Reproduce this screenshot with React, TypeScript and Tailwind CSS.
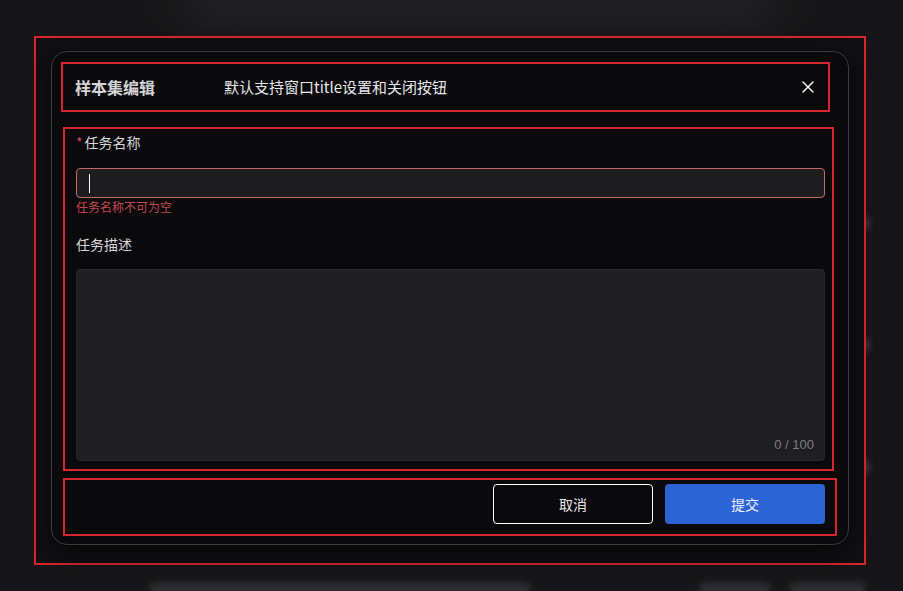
import { X } from 'lucide-react'

const font = { fontFamily: '"Noto Sans CJK SC", "Noto Sans", sans-serif' }

function Backdrop() {
  // blurred page content behind the dialog
  return (
    <div className="pointer-events-none absolute inset-0">
      <div className="absolute left-[180px] top-[-20px] h-[40px] w-[600px] rounded-full bg-[#26262b] blur-xl" />
      <div className="absolute left-[850px] top-[215px] h-[16px] w-[20px] rounded-full bg-[#3a3a3c] blur-[3px]" />
      <div className="absolute left-[850px] top-[337px] h-[16px] w-[20px] rounded-full bg-[#3a3a3c] blur-[3px]" />
      <div className="absolute left-[850px] top-[459px] h-[16px] w-[20px] rounded-full bg-[#3a3a3c] blur-[3px]" />
      <div className="absolute left-[150px] top-[582px] h-[14px] w-[380px] rounded bg-[#2e2e31] blur-[3px]" />
      <div className="absolute left-[700px] top-[582px] h-[14px] w-[70px] rounded bg-[#2e2e31] blur-[3px]" />
      <div className="absolute left-[790px] top-[582px] h-[14px] w-[75px] rounded bg-[#2e2e31] blur-[3px]" />
    </div>
  )
}

export default function App() {
  return (
    <div className="relative h-[591px] w-[903px] overflow-hidden bg-[#161618]" style={font}>
      <Backdrop />
      <div className="relative pl-[34px] pt-[36px]">
        <div className="w-[832px] border-2 border-[#d92530] bg-[#101013] pb-[18px] pl-[15px] pr-[15px] pt-[13px]">
          <div className="h-[494px] w-[798px] rounded-[16px] border border-[#3b3b3e] bg-[#0a0a0d] pt-[10px] shadow-[0_8px_24px_rgba(0,0,0,0.6)]">
            {/* header */}
            <div className="ml-[9px] flex h-[50px] w-[769px] items-center border-2 border-[#d92530] pl-[12px] pr-[8px]">
              <span className="w-[149px] text-[16px] font-bold text-[#d4d4d6]">样本集编辑</span>
              <span className="text-[15px] text-[#e8e8ea]">默认支持窗口title设置和关闭按钮</span>
              <button type="button" className="ml-auto flex h-6 w-6 items-center justify-center text-white">
                <X size={20} strokeWidth={1.6} />
              </button>
            </div>

            {/* body */}
            <div className="ml-[11px] mt-[15px] h-[344px] w-[771px] border-2 border-[#d92530] pl-[11px] pr-[7px] pt-[3px]">
              <label className="flex h-5 items-center text-[14px] text-[#d8d8da]">
                <span className="mr-[2px] text-[#c8504f]">*</span>任务名称
              </label>
              <div className="mt-[16px] flex h-[30px] w-[749px] items-center rounded-[4px] border border-[#c36a68] bg-[#1d1d20] px-3">
                <span className="h-[19px] w-px bg-white" />
              </div>
              <p className="mt-[1px] h-4 text-[12px] leading-4 text-[#c4474c]">任务名称不可为空</p>
              <label className="mt-[19px] flex h-5 items-center text-[14px] text-[#d8d8da]">任务描述</label>
              <div className="mt-[15px] flex h-[192px] w-[749px] items-end justify-end rounded-[4px] border border-[#29292c] bg-[#1f1f22] px-[10px] pb-[6px]">
                <span className="text-[13px] text-[#7d7d80]" style={{ fontFamily: '"Liberation Sans", Arial, sans-serif' }}>
                  0 / 100
                </span>
              </div>
            </div>

            {/* footer */}
            <div className="ml-[11px] mt-[7px] flex h-[58px] w-[774px] items-start justify-end gap-[12px] border-2 border-[#d92530] pr-[10px] pt-[4px]">
              <button
                type="button"
                className="h-[40px] w-[160px] rounded-[4px] border border-white bg-[#0a0a0d] text-[14px] text-[#e8e8ea]"
              >
                取消
              </button>
              <button
                type="button"
                className="h-[40px] w-[160px] rounded-[4px] bg-[#2c64d6] text-[14px] text-[#eef2ff]"
              >
                提交
              </button>
            </div>
          </div>
        </div>
      </div>
    </div>
  )
}
